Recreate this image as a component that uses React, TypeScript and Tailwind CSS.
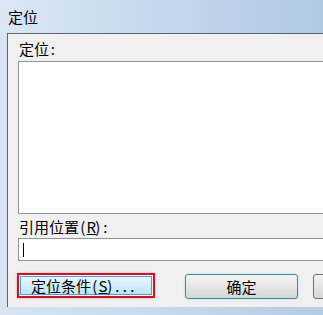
import React from "react";

function H({ t }: { t: string }) {
  return (
    <>
      {t.split("").map((c, i) => (
        <span key={i} className="inline-block w-[7.5px] text-center">
          {c}
        </span>
      ))}
    </>
  );
}

function U({ c }: { c: string }) {
  return <span className="inline-block w-[7.5px] text-center underline">{c}</span>;
}

export default function App() {
  const font = { fontFamily: '"Noto Sans CJK SC","Noto Sans",sans-serif' };
  return (
    <div
      className="w-[323px] h-[315px] overflow-hidden flex flex-col bg-gradient-to-r from-[#d6e4f2] via-[#c7d9ec] to-[#b4cbe3] text-black"
      style={font}
    >
      <div className="h-[33px] shrink-0 flex items-center pl-[8px] pb-[1px] text-[15px] leading-none bg-gradient-to-r from-[#dbe7f4] via-[#c4d7ec] to-[#b0c8e2]">
        定位
      </div>
      <div className="flex-1 flex flex-col pl-[7px] pb-[8px]">
        <div className="flex-1 w-[340px] border-l border-t border-[#5b6470] bg-[#f0f0f0] flex flex-col pl-[10px]">
          <div className="mt-[5px] h-[22px] pl-[1px] text-[15px] leading-[20px]">
            定位<H t=":" />
          </div>
          <div className="h-[153px] border border-[#8e959d] bg-white"></div>
          <div className="h-[24px] pl-[1px] pt-[4px] text-[15px] leading-[17px]">
            引用位置<H t="(" />
            <U c="R" />
            <H t="):" />
          </div>
          <div className="h-[23px] border border-[#8e959d] bg-white flex items-center pl-[4px]">
            <div className="w-[1px] h-[14px] bg-black"></div>
          </div>
          <div className="mt-[12px] flex items-start">
            <div className="shrink-0 -ml-[1px] w-[138px] h-[25px] border-[2px] border-[#c4172c] shadow-[0_0_2px_#f08a96] p-[1px]">
              <div className="w-full h-full border border-[#5b9bd0] bg-gradient-to-b from-[#eaf6fd] to-[#bee4f8] flex items-center pl-[10px] text-[15px] leading-none">
                定位条件<H t="(" />
                <U c="S" />
                <H t=")..." />
              </div>
            </div>
            <div className="shrink-0 ml-[30px] mt-[1px] w-[113px] h-[25px] rounded-[3px] border border-[#3c8a9a] shadow-[0_0_2px_#9fd8e6] bg-gradient-to-b from-[#f4f4f4] via-[#e6e6e6] to-[#d4d4d4] flex items-center justify-center text-[15px] leading-none">
              确定
            </div>
            <div className="shrink-0 ml-[15px] mt-[1px] w-[60px] h-[25px] rounded-[3px] border border-[#707070] bg-gradient-to-b from-[#f2f2f2] to-[#d8d8d8]"></div>
          </div>
        </div>
      </div>
    </div>
  );
}
